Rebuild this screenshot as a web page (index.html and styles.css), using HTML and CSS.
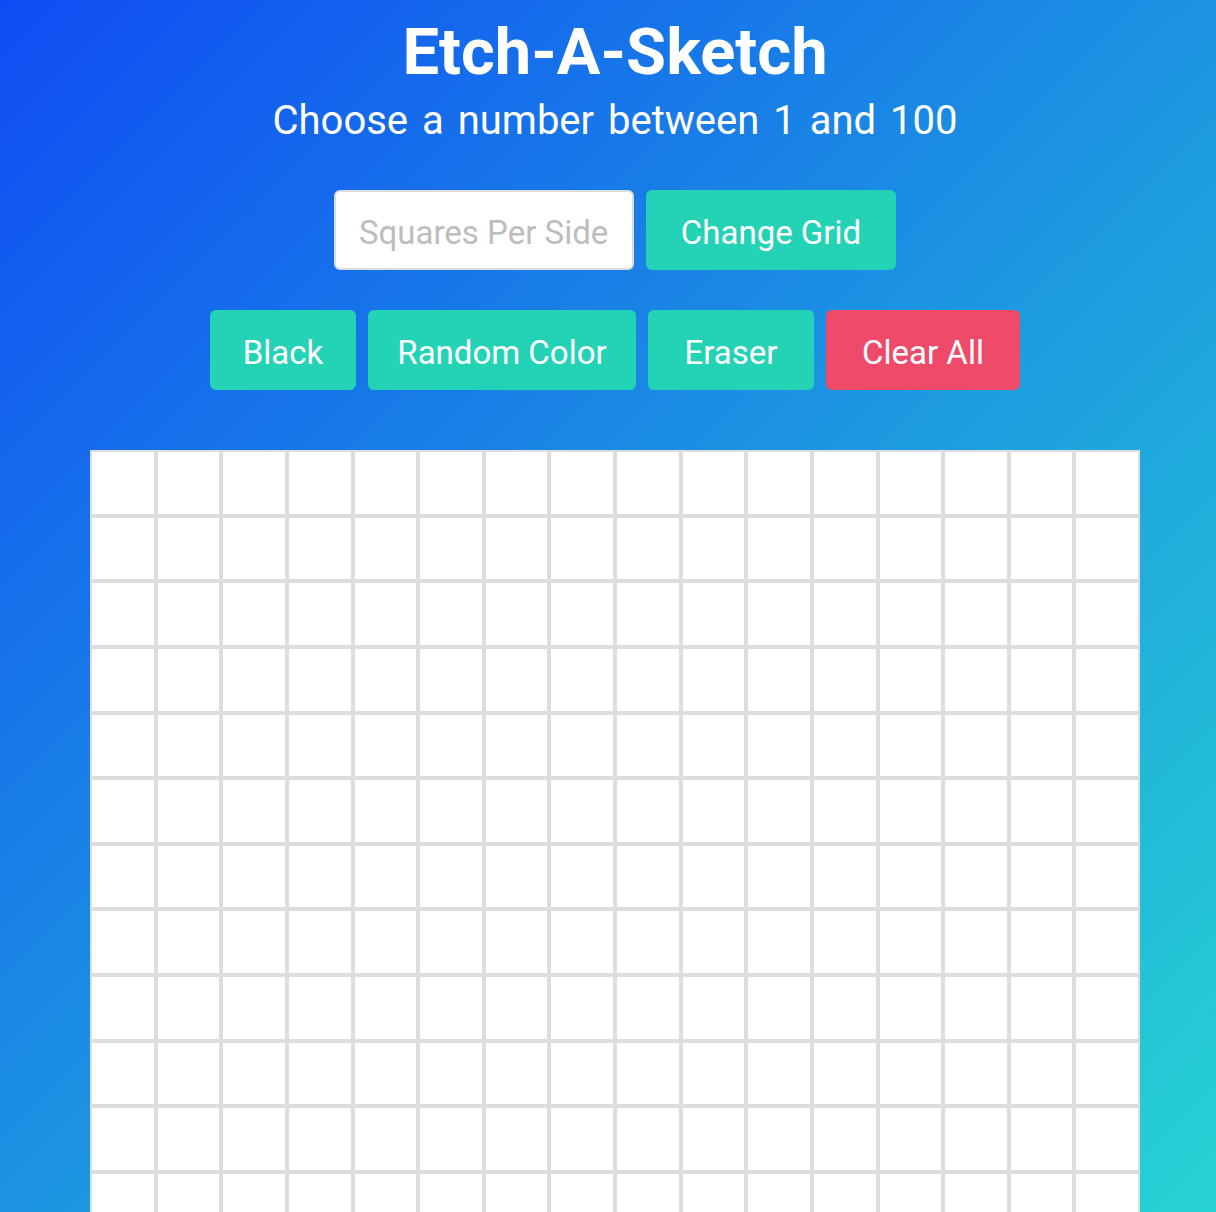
FILE: index.html
```html
<!DOCTYPE html>
<html lang="en">
<head>
<meta charset="utf-8">
<title>Etch-A-Sketch</title>
<link rel="stylesheet" href="styles.css">
</head>
<body>
<main class="page">
  <header class="header">
    <h1 class="title">Etch-A-Sketch</h1>
    <p class="subtitle">Choose a number between 1 and 100</p>
  </header>
  <div class="controls">
    <input class="size-input" type="text" placeholder="Squares Per Side">
    <button class="btn btn-change">Change Grid</button>
  </div>
  <div class="controls modes">
    <button class="btn btn-black">Black</button>
    <button class="btn btn-random">Random Color</button>
    <button class="btn btn-eraser">Eraser</button>
    <button class="btn btn-clear">Clear All</button>
  </div>
  <div class="grid" id="grid"></div>
</main>
<script src="script.js"></script>
</body>
</html>
```
FILE: styles.css
```css
html {
  min-height: 100%;
  background: linear-gradient(to bottom right, #104cf4 0%, #1d9ae0 55%, #26d3d3 100%) fixed;
}
body {
  margin: 0;
  font-family: Roboto, "Noto Sans", sans-serif;
  color: #fff;
}
.page {
  padding-left: 14px;
  padding-bottom: 40px;
  display: flex;
  flex-direction: column;
  align-items: center;
}
.header {
  text-align: center;
  padding-top: 14px;
}
.title {
  margin: 0;
  font-size: 65px;
  font-weight: 700;
  line-height: 76px;
}
.subtitle {
  margin: 3px 0 0;
  font-size: 40px;
  line-height: 56px;
  font-weight: 400;
  word-spacing: 4px;
}
.controls {
  display: flex;
  gap: 12px;
  margin-top: 40px;
}
.controls:first-of-type { margin-top: 41px; }
.size-input {
  box-sizing: border-box;
  width: 300px;
  height: 80px;
  border: 2px solid #dcdcdc;
  border-radius: 6px;
  padding: 4px 23px 0;
  font-family: inherit;
  font-size: 33px;
  color: #333;
  background: #fff;
  outline: none;
}
.size-input::placeholder { color: #bdbdbd; }
.btn {
  box-sizing: border-box;
  height: 80px;
  border: none;
  border-radius: 6px;
  background: #24d3b5;
  color: #fff;
  font-family: inherit;
  font-size: 33px;
  padding: 4px 0 0;
  cursor: pointer;
}
.btn-change { width: 250px; }
.btn-black { width: 146px; }
.btn-random { width: 268px; }
.btn-eraser { width: 166px; }
.btn-clear { width: 194px; background: #ef4a6a; }
.grid {
  margin-top: 60px;
  width: 1050px;
  display: grid;
  grid-template-columns: repeat(16, 1fr);
}
.cell {
  box-sizing: border-box;
  aspect-ratio: 1 / 1;
  border: 2px solid #dddddd;
  background: #fff;
}
```
FILE: script.js
```js
const grid = document.getElementById('grid');
for (let i = 0; i < 256; i++) {
  const c = document.createElement('div');
  c.className = 'cell';
  grid.appendChild(c);
}
```
